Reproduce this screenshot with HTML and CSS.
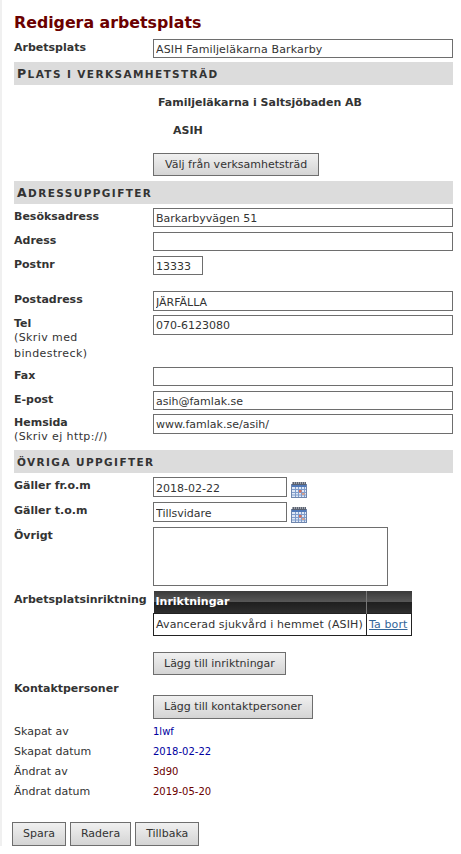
FILE: index.html
```html
<!DOCTYPE html>
<html lang="sv">
<head>
    <meta charset="UTF-8">
    <meta name="viewport" content="width=device-width, initial-scale=1.0">
    <title>Redigera arbetsplats</title>
    <link rel="stylesheet" href="styles.css">
</head>
<body>
    <form id="editForm">
        <h1>Redigera arbetsplats</h1>

        <div class="row tight">
            <label>Arbetsplats</label>
            <input type="text" class="wide-text" value="ASIH Familjeläkarna Barkarby">
        </div>

        <h2 class="lead-cap">Plats i verksamhetsträd</h2>
        <div class="tree">
            <div class="tree-parent">Familjeläkarna i Saltsjöbaden AB</div>
            <div class="tree-child">ASIH</div>
        </div>
        <div class="row tree-action">
            <span></span>
            <div><button type="button">Välj från verksamhetsträd</button></div>
        </div>

        <h2 class="lead-cap">Adressuppgifter</h2>
        <div class="row"><label>Besöksadress</label><input type="text" value="Barkarbyvägen 51"></div>
        <div class="row"><label>Adress</label><input type="text"></div>
        <div class="row postnr"><label>Postnr</label><div><input type="text" class="short" value="13333"></div></div>
        <div class="row tall tight"><label>Postadress</label><input type="text" value="JÄRFÄLLA"></div>
        <div class="row tall-input">
            <label>Tel<small>(Skriv med<br>bindestreck)</small></label>
            <input type="text" value="070-6123080">
        </div>
        <div class="row"><label>Fax</label><input type="text"></div>
        <div class="row tight"><label>E-post</label><input type="text" value="asih@famlak.se"></div>
        <div class="row tall-input">
            <label>Hemsida<small>(Skriv ej http://)</small></label>
            <input type="text" value="www.famlak.se/asih/">
        </div>

        <h2>Övriga uppgifter</h2>
        <div class="row">
            <label>Gäller fr.o.m</label>
            <div class="date">
                <input type="text" value="2018-02-22">
                <svg class="cal" width="16" height="16" viewBox="0 0 16 16"><use href="#calIcon"/></svg>
            </div>
        </div>
        <div class="row">
            <label>Gäller t.o.m</label>
            <div class="date">
                <input type="text" value="Tillsvidare">
                <svg class="cal" width="16" height="16" viewBox="0 0 16 16"><use href="#calIcon"/></svg>
            </div>
        </div>
        <div class="row">
            <label>Övrigt</label>
            <div><textarea></textarea></div>
        </div>
        <div class="row">
            <label>Arbetsplatsinriktning</label>
            <div>
                <table>
                    <thead><tr><th class="col-name">Inriktningar</th><th class="col-link"></th></tr></thead>
                    <tbody><tr><td>Avancerad sjukvård i hemmet (ASIH)</td><td><a href="#">Ta bort</a></td></tr></tbody>
                </table>
            </div>
        </div>
        <div class="row add-focus">
            <span></span>
            <div><button type="button">Lägg till inriktningar</button></div>
        </div>
        <div class="contact-label"><label>Kontaktpersoner</label></div>
        <div class="row add-contact">
            <span></span>
            <div><button type="button">Lägg till kontaktpersoner</button></div>
        </div>

        <dl class="meta">
            <dt>Skapat av</dt><dd class="created">1lwf</dd>
            <dt>Skapat datum</dt><dd class="created">2018-02-22</dd>
            <dt>Ändrat av</dt><dd class="changed">3d90</dd>
            <dt>Ändrat datum</dt><dd class="changed">2019-05-20</dd>
        </dl>

        <div class="actions">
            <button type="button">Spara</button>
            <button type="button">Radera</button>
            <button type="button">Tillbaka</button>
        </div>
    </form>

    <svg width="0" height="0" class="defs">
        <symbol id="calIcon" viewBox="0 0 16 16">
            <rect x="0.5" y="2.5" width="15" height="13" fill="#dfe8f6" stroke="#6f86ad"/>
            <rect x="1" y="0" width="14" height="3" fill="#5a6272"/>
            <path d="M1 1h1M3 1h1M5 1h1M7 1h1M9 1h1M11 1h1M13 1h1" stroke="#e8e8e8" stroke-width="1"/>
            <rect x="1" y="3" width="14" height="2" fill="#4f78b8"/>
            <path d="M4.5 5v10M7.5 5v10M10.5 5v10M13.5 5v10M1 7.5h14M1 10.5h14M1 13h14" stroke="#7f9ccb"/>
            <rect x="8" y="8" width="2.5" height="2.5" fill="#d9705a"/>
            <rect x="11" y="11" width="2.5" height="2" fill="#d9a08a"/>
        </symbol>
    </svg>
</body>
</html>
```
FILE: styles.css
```css
body {
    margin: 0;
    padding: 0;
    background-color: #fff;
    border-left: 2px solid #f0f0f0;
    font-family: "DejaVu Sans", Verdana, sans-serif;
    font-size: 11px;
    color: #333;
}
#editForm {
    padding: 12px 8px 0 12px;
}
h1 {
    margin: 0 0 7px;
    font-size: 15.8px;
    line-height: 22px;
    height: 20px;
    font-weight: bold;
    color: #6b0000;
}
h2 {
    margin: 4px 0 4px;
    padding: 0 3px;
    height: 23px;
    line-height: 24px;
    background-color: #dcdcdc;
    font-size: 10.5px;
    font-weight: bold;
    text-transform: uppercase;
    letter-spacing: 1.4px;
    color: #333;
}
h2.lead-cap::first-letter {
    font-size: 12.5px;
}
.row {
    display: grid;
    grid-template-columns: 139px 1fr;
    margin-bottom: 5px;
}
.row.tight {
    margin-bottom: 4px;
}
label {
    display: block;
    padding-top: 2px;
    font-weight: bold;
    line-height: 13px;
}
small {
    display: block;
    font-size: 11px;
    font-weight: normal;
    line-height: 16px;
    letter-spacing: 0.4px;
}
input, textarea {
    box-sizing: border-box;
    display: block;
    width: 100%;
    height: 19px;
    margin: 0;
    padding: 2px 2px 0;
    border: 1px solid #6e6e6e;
    background: #fff;
    font-family: inherit;
    font-size: 11px;
    color: #333;
    border-radius: 0;
}
input.short {
    width: 50px;
}
input.wide-text {
    letter-spacing: 0.15px;
}
.tall input, .tall-input input {
    height: 20px;
}
.tall-input input {
    padding: 1px 2px;
}
textarea {
    width: 235px;
    height: 59px;
    resize: none;
}
button {
    box-sizing: border-box;
    height: 23px;
    padding: 0 10px;
    border: 1px solid #6e6e6e;
    background: linear-gradient(#f0f0f0, #d4d4d4);
    font-family: inherit;
    font-size: 11px;
    color: #333;
    border-radius: 0;
}
.tree {
    height: 64px;
    font-weight: bold;
}
.tree-parent {
    padding: 7px 0 0 144px;
    line-height: 14px;
}
.tree-child {
    padding: 14px 0 0 159px;
    line-height: 14px;
}
.tree-action button {
    padding: 0 11px;
}
.postnr {
    margin-bottom: 16px;
}
.date {
    display: flex;
    align-items: flex-start;
}
.date input {
    width: 134px;
    height: 20px;
}
.cal {
    margin: 5px 0 -1px 4px;
}
table {
    border-collapse: collapse;
    table-layout: fixed;
    width: 259px;
    font-size: 11px;
}
.col-name {
    width: 213px;
}
th {
    box-sizing: border-box;
    height: 22px;
    padding: 0 2px;
    text-align: left;
    color: #fff;
    background: linear-gradient(#3a3a3a 0, #585858 50%, #1f1f1f 50%, #2e2e2e 100%);
    border-right: 1px solid #777;
}
th:last-child {
    border-right: 0;
}
td {
    height: 21px;
    padding: 0 2px;
    border: 1px solid #222;
    white-space: nowrap;
    letter-spacing: 0.12px;
}
a {
    color: #336699;
}
.add-focus {
    margin: 16px 0 0;
}
.contact-label {
    margin-top: 5px;
    height: 15px;
}
.add-contact {
    margin: 0;
}
.add-contact button {
    height: 24px;
}
.meta {
    display: grid;
    grid-template-columns: 139px 1fr;
    grid-auto-rows: 20px;
    margin: 3px 0 0;
    align-items: center;
}
.meta dt {
    line-height: 20px;
}
.meta dd {
    margin: 0;
    font-size: 10px;
    line-height: 20px;
}
.created {
    color: #0000a0;
}
.changed {
    color: #6b0000;
}
.actions {
    display: flex;
    gap: 4px;
    margin: 20px 0 0 -2px;
}
.actions button {
    height: 24px;
}
.defs {
    position: absolute;
}
```
